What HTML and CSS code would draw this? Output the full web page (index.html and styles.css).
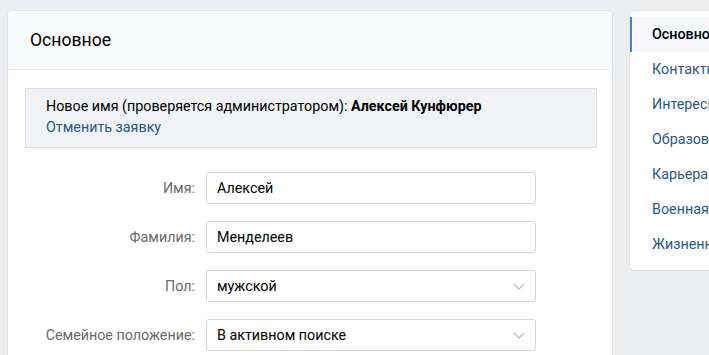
FILE: index.html
```html
<!DOCTYPE html>
<html lang="ru">
<head>
  <meta charset="UTF-8" />
  <meta name="viewport" content="width=device-width, initial-scale=1.0" />
  <title>Редактирование страницы</title>
  <link rel="stylesheet" href="styles.css">
</head>
<body>
  <div class="page">
    <div class="card edit">
      <div class="edit-header">Основное</div>

      <div class="edit-body">
        <div class="notice">
          <div>Новое имя (проверяется администратором): <b>Алексей Кунфюрер</b></div>
          <a class="notice-link" href="#">Отменить заявку</a>
        </div>

        <div class="form">
          <div class="row">
            <div class="label">Имя:</div>
            <div class="field">Алексей</div>
          </div>

          <div class="row">
            <div class="label">Фамилия:</div>
            <div class="field">Менделеев</div>
          </div>

          <div class="row">
            <div class="label">Пол:</div>
            <div class="field select">
              мужской
              <svg class="chevron" width="12" height="7" viewBox="0 0 12 7"><path d="M1 1l5 5 5-5" fill="none" stroke="#b8c1cc" stroke-width="1.4"/></svg>
            </div>
          </div>

          <div class="row">
            <div class="label">Семейное положение:</div>
            <div class="field select">
              В активном поиске
              <svg class="chevron" width="12" height="7" viewBox="0 0 12 7"><path d="M1 1l5 5 5-5" fill="none" stroke="#b8c1cc" stroke-width="1.4"/></svg>
            </div>
          </div>
        </div>
      </div>
    </div>

    <div class="card menu">
      <ul>
        <li class="active">Основное</li>
        <li>Контакты</li>
        <li>Интересы</li>
        <li>Образование</li>
        <li>Карьера</li>
        <li>Военная служба</li>
        <li>Жизненная позиция</li>
      </ul>
    </div>
  </div>
</body>
</html>
```

FILE: styles.css
```css
body {
  margin: 0;
  font-family: Roboto, 'Open Sans', sans-serif;
  font-size: 14.3px;
  background-color: #edeef0;
  color: #000;
  overflow: hidden;
}

.page {
  display: flex;
  gap: 18px;
  padding: 11px 0 0 8px;
}

.card {
  background-color: #fff;
  border-radius: 4px;
  box-shadow: 0 1px 0 0 #d7d8db, 0 0 0 1px #e3e4e8;
  flex-shrink: 0;
}

.edit {
  width: 604px;
  height: 400px;
}

.edit-header {
  height: 58px;
  line-height: 58px;
  padding: 0 22px;
  font-size: 17.6px;
  background-color: #fafbfc;
  border-bottom: 1px solid #e7e8ec;
  border-radius: 4px 4px 0 0;
}

.edit-body {
  padding: 18px 15px 0 17px;
}

.notice {
  background-color: #f0f2f5;
  border: 1px solid #dce1e6;
  padding: 7px 20px 10px;
  line-height: 20px;
}

.notice-link {
  display: inline-block;
  margin-top: 1px;
  color: #2a5885;
  text-decoration: none;
}

.form {
  display: flex;
  flex-direction: column;
  gap: 17px;
  margin-top: 24px;
}

.row {
  display: flex;
  align-items: center;
}

.label {
  width: 170px;
  margin-right: 11px;
  text-align: right;
  color: #6a6a6a;
  white-space: nowrap;
}

.field {
  position: relative;
  box-sizing: border-box;
  width: 330px;
  height: 32px;
  line-height: 30px;
  padding: 0 10px;
  border: 1px solid #d3d9de;
  border-radius: 3px;
}

.chevron {
  position: absolute;
  right: 10px;
  top: 12px;
}

.menu {
  width: 200px;
  height: 259px;
}

.menu ul {
  list-style: none;
  margin: 0;
  padding: 6px 0 8px;
}

.menu li {
  height: 35px;
  line-height: 35px;
  padding-left: 20px;
  border-left: 2px solid transparent;
  color: #2a5885;
  white-space: nowrap;
}

.menu li.active {
  border-left-color: #5181b8;
  background-color: #f5f7fa;
  color: #000;
  font-weight: 500;
}
```
